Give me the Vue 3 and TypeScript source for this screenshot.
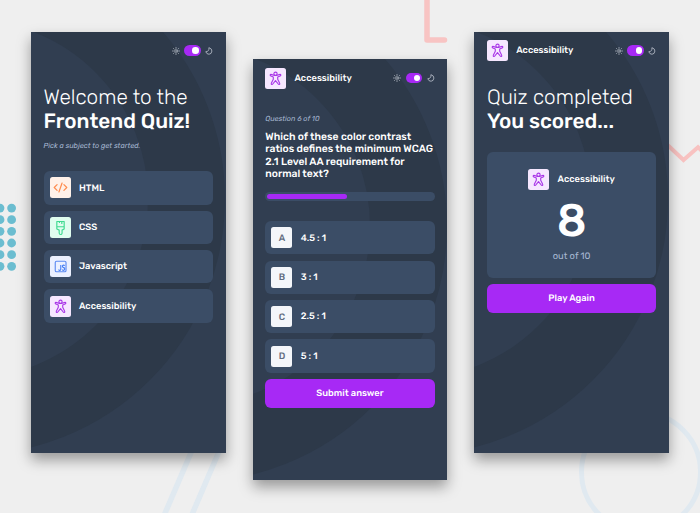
<script setup lang="ts">
interface Subject {
  name: string
  icon: string
}

interface Answer {
  key: string
  text: string
}

const subjects: Subject[] = [
  { name: 'HTML', icon: 'html' },
  { name: 'CSS', icon: 'css' },
  { name: 'Javascript', icon: 'js' },
  { name: 'Accessibility', icon: 'a11y' },
]

const answers: Answer[] = [
  { key: 'A', text: '4.5 : 1' },
  { key: 'B', text: '3 : 1' },
  { key: 'C', text: '2.5 : 1' },
  { key: 'D', text: '5 : 1' },
]

const questionLines: string[] = [
  'Which of these color contrast',
  'ratios defines the minimum WCAG',
  '2.1 Level AA requirement for',
  'normal text?',
]

const screens = ['start', 'question', 'result'] as const
</script>

<template>
  <main class="board">
    <svg class="symbols" width="0" height="0" aria-hidden="true">
      <symbol id="icon-html" viewBox="0 0 40 40">
        <path d="M13.5 14.5 8 20l5.500 5.500M26.500 14.500 32 20l-5.500 5.500M23 11.500l-6 17" fill="none" stroke="#ff8c4f" stroke-width="2.300" stroke-linecap="round" stroke-linejoin="round" />
      </symbol>
      <symbol id="icon-css" viewBox="0 0 40 40">
        <path d="M13 8.500h14v14.500l-4 2v5.500a2.500 2.500 0 0 1-5.500 0V25L13 23ZM13 18.500h14M18 8.500v3M22.500 8.500v5" fill="none" stroke="#3fda91" stroke-width="2.200" stroke-linejoin="round" />
      </symbol>
      <symbol id="icon-js" viewBox="0 0 40 40">
        <rect x="10" y="10" width="20.500" height="20" rx="2.500" fill="none" stroke="#5e8bf2" stroke-width="2.200" />
        <path d="M20.500 17v8.500q0 1.800-2 1.800t-2-1.600M28 18.500q-.8-1.200-2.300-1.200-2 0-2 2.200t2.200 2.600 2.200 2.600-2.200 2.600q-1.500 0-2.500-1.400" fill="none" stroke="#447df5" stroke-width="2.100" />
      </symbol>
      <symbol id="icon-a11y" viewBox="0 0 40 40">
        <g fill="none" stroke="#a936e8" stroke-width="2.100" stroke-linejoin="round">
          <circle cx="20" cy="11" r="3.100" />
          <path d="M16.600 13.600 12 12.200q-1.800-.3-2.100 1.100-.2 1.300 1.400 2l4.500 1.900v4.300L12 29.200q-.5 1.700.8 2.200 1.300.4 2-.9L20 24l5.200 6.500q.7 1.300 2 .9 1.300-.5.800-2.200l-3.800-7.700v-4.300l4.500-1.900q1.600-.7 1.400-2-.3-1.400-2.100-1.100l-4.600 1.400q-3.400 1.500-6.800 0Z" />
        </g>
      </symbol>
      <symbol id="icon-sun" viewBox="0 0 16 16">
        <g fill="none" stroke="#c5cbd5" stroke-width="1.400" stroke-linecap="round">
          <circle cx="8" cy="8" r="2.600" />
          <path d="M8 1v1.700M8 13.300V15M1 8h1.700M13.300 8H15M3 3l1.200 1.200M11.800 11.800 13 13M3 13l1.200-1.200M11.800 4.200 13 3" />
        </g>
      </symbol>
      <symbol id="icon-moon" viewBox="0 0 16 16">
        <path d="M7.800 1.300q1 7.700-6.300 8.200 2 5.200 6.600 5 5.200-.4 5.700-6.400.1-5-6-6.800Z" fill="none" stroke="#c5cbd5" stroke-width="1.500" stroke-linejoin="round" />
      </symbol>
    </svg>

    <svg class="decor" viewBox="0 0 700 513" width="700" height="513" aria-hidden="true">
      <g fill="none">
        <path d="M427 -5V40h17.500" stroke="#f8c4c3" stroke-width="5.500" stroke-linecap="round" stroke-linejoin="round" />
        <path d="M666 143.500 683.500 160 698 147.200l6 6" stroke="#f8c2c1" stroke-width="4" />
        <circle cx="641" cy="472" r="59.500" stroke="#e0e9f0" stroke-width="5" />
        <path d="M193 448 163 518M220.500 448 190.500 518" stroke="#e0e9f0" stroke-width="5.500" />
      </g>
      <g fill="#6bbdd0">
        <template v-for="row in 6" :key="row">
          <circle cx="0" :cy="196.400 + row * 11.650" r="4.400" />
          <circle cx="11.600" :cy="196.400 + row * 11.650" r="4.400" />
        </template>
      </g>
    </svg>

    <section v-for="screen in screens" :key="screen" class="screen" :class="screen">
      <svg class="ring" viewBox="0 0 194.500 421" aria-hidden="true">
        <circle cx="-62" cy="167" r="217.500" fill="none" stroke="#2d3949" stroke-width="77" />
      </svg>

      <header class="header">
        <div v-if="screen !== 'start'" class="subject">
          <svg class="badge a11y"><use href="#icon-a11y" /></svg>
          <span class="label">Accessibility</span>
        </div>
        <div class="theme">
          <svg class="mode"><use href="#icon-sun" /></svg>
          <span class="toggle"><i class="knob"></i></span>
          <svg class="mode"><use href="#icon-moon" /></svg>
        </div>
      </header>

      <template v-if="screen === 'start'">
        <h1 class="title">
          <span class="light">Welcome to the</span>
          <span class="bold">Frontend Quiz!</span>
        </h1>
        <p class="hint">Pick a subject to get started.</p>
        <div class="list">
          <div v-for="s in subjects" :key="s.name" class="option">
            <svg class="badge" :class="s.icon"><use :href="'#icon-' + s.icon" /></svg>
            <span class="label">{{ s.name }}</span>
          </div>
        </div>
      </template>

      <template v-else-if="screen === 'question'">
        <p class="hint counter">Question 6 of 10</p>
        <h2 class="question-text">
          <span v-for="line in questionLines" :key="line">{{ line }}</span>
        </h2>
        <div class="progress"><div class="bar"></div></div>
        <div class="list">
          <div v-for="a in answers" :key="a.key" class="option">
            <span class="badge letter">{{ a.key }}</span>
            <span class="label">{{ a.text }}</span>
          </div>
        </div>
        <button class="action">Submit answer</button>
      </template>

      <template v-else>
        <h1 class="title">
          <span class="light">Quiz completed</span>
          <span class="bold">You scored...</span>
        </h1>
        <div class="score-card">
          <div class="subject">
            <svg class="badge a11y"><use href="#icon-a11y" /></svg>
            <span class="label">Accessibility</span>
          </div>
          <strong class="score">8</strong>
          <span class="total">out of 10</span>
        </div>
        <button class="action">Play Again</button>
      </template>
    </section>
  </main>
</template>

<style>
body {
  margin: 0;
  background: #efefef;
}
</style>

<style scoped>
.board {
  position: relative;
  box-sizing: border-box;
  display: flex;
  align-items: flex-start;
  gap: 27.200px;
  width: 700px;
  height: 513px;
  padding: 32px 0 0 31px;
  overflow: hidden;
  background: #efefef;
  font-family: Rubik, Roboto, sans-serif;
  text-rendering: geometricPrecision;
  color: #fff;
}
.symbols,
.decor {
  position: absolute;
  left: 0;
  top: 0;
}
.screen {
  position: relative;
  isolation: isolate;
  flex: none;
  box-sizing: border-box;
  display: flex;
  flex-direction: column;
  width: 194.500px;
  height: 421px;
  padding: 0 12.600px;
  background: #313e51;
  box-shadow: 0 7px 13px rgba(0, 0, 0, 0.36);
}
.screen.question {
  margin-top: 27px;
}
.ring {
  position: absolute;
  z-index: -1;
  inset: 0;
  width: 100%;
  height: 100%;
}
.header {
  display: flex;
  align-items: center;
  height: 37.400px;
}
.question .header {
  height: 38px;
}
.subject {
  display: flex;
  align-items: center;
  gap: 8.200px;
}
.theme {
  display: flex;
  align-items: center;
  gap: 4.200px;
  margin-left: auto;
}
.mode {
  width: 8px;
  height: 8px;
}
.toggle {
  display: flex;
  align-items: center;
  justify-content: flex-end;
  box-sizing: border-box;
  width: 16.800px;
  height: 10.600px;
  padding: 2px;
  border-radius: 6px;
  background: #a729f5;
}
.knob {
  width: 6.600px;
  height: 6.600px;
  border-radius: 50%;
  background: #fff;
}
.badge {
  flex: none;
  width: 21px;
  height: 21px;
  border-radius: 2.500px;
}
.html { background: #fff1e9; }
.css { background: #e0fdef; }
.js { background: #ebf0ff; }
.a11y { background: #f6e7ff; }
.letter {
  display: flex;
  align-items: center;
  justify-content: center;
  box-sizing: border-box;
  padding-top: 1px;
  background: #f4f6fa;
  color: #626c7f;
  font-size: 9.330px;
  font-weight: 500;
}
.label {
  padding-top: 1.400px;
  font-size: 9.330px;
  font-weight: 500;
  line-height: 12px;
  white-space: nowrap;
}
.title {
  display: flex;
  flex-direction: column;
  margin: 16.200px 0 0;
  font-size: 20.750px;
  line-height: 24.500px;
  white-space: nowrap;
}
.light { font-weight: 300; }
.bold { font-weight: 500; }
.hint {
  margin: 6.600px 0 0;
  color: #a7b8d2;
  font-size: 7.260px;
  font-style: italic;
  line-height: 10px;
  white-space: nowrap;
}
.list {
  display: flex;
  flex-direction: column;
  gap: 6.200px;
}
.start .list { margin-top: 20.200px; }
.option {
  display: flex;
  align-items: center;
  gap: 8.200px;
  box-sizing: border-box;
  height: 33.200px;
  padding-left: 6.200px;
  border-radius: 6px;
  background: #3b4d66;
}
.counter { margin-top: 17.100px; }
.question-text {
  display: flex;
  flex-direction: column;
  margin: 6.900px 0 0;
  font-size: 10.370px;
  font-weight: 500;
  line-height: 12.450px;
  white-space: nowrap;
}
.progress {
  box-sizing: border-box;
  height: 8.500px;
  margin: 11.300px 0 20.700px;
  padding: 2px;
  border-radius: 5px;
  background: #3b4d66;
}
.bar {
  width: 79.500px;
  height: 4.500px;
  border-radius: 3px;
  background: #a729f5;
}
.action {
  width: 100%;
  height: 29px;
  margin: 6.200px 0 0;
  padding: 0;
  border: 0;
  border-radius: 6px;
  background: #a729f5;
  color: #fff;
  font-family: inherit;
  font-size: 9.330px;
  font-weight: 500;
  text-rendering: inherit;
}
.score-card {
  display: flex;
  flex-direction: column;
  align-items: center;
  box-sizing: border-box;
  height: 125.400px;
  margin-top: 17.600px;
  padding-top: 16.600px;
  border-radius: 6px;
  background: #3b4d66;
}
.score {
  margin-top: 8.600px;
  font-size: 45.600px;
  font-weight: 500;
  line-height: 46px;
}
.total {
  margin-top: 6.600px;
  color: #a7b8d2;
  font-size: 9.330px;
  line-height: 12px;
}
</style>
